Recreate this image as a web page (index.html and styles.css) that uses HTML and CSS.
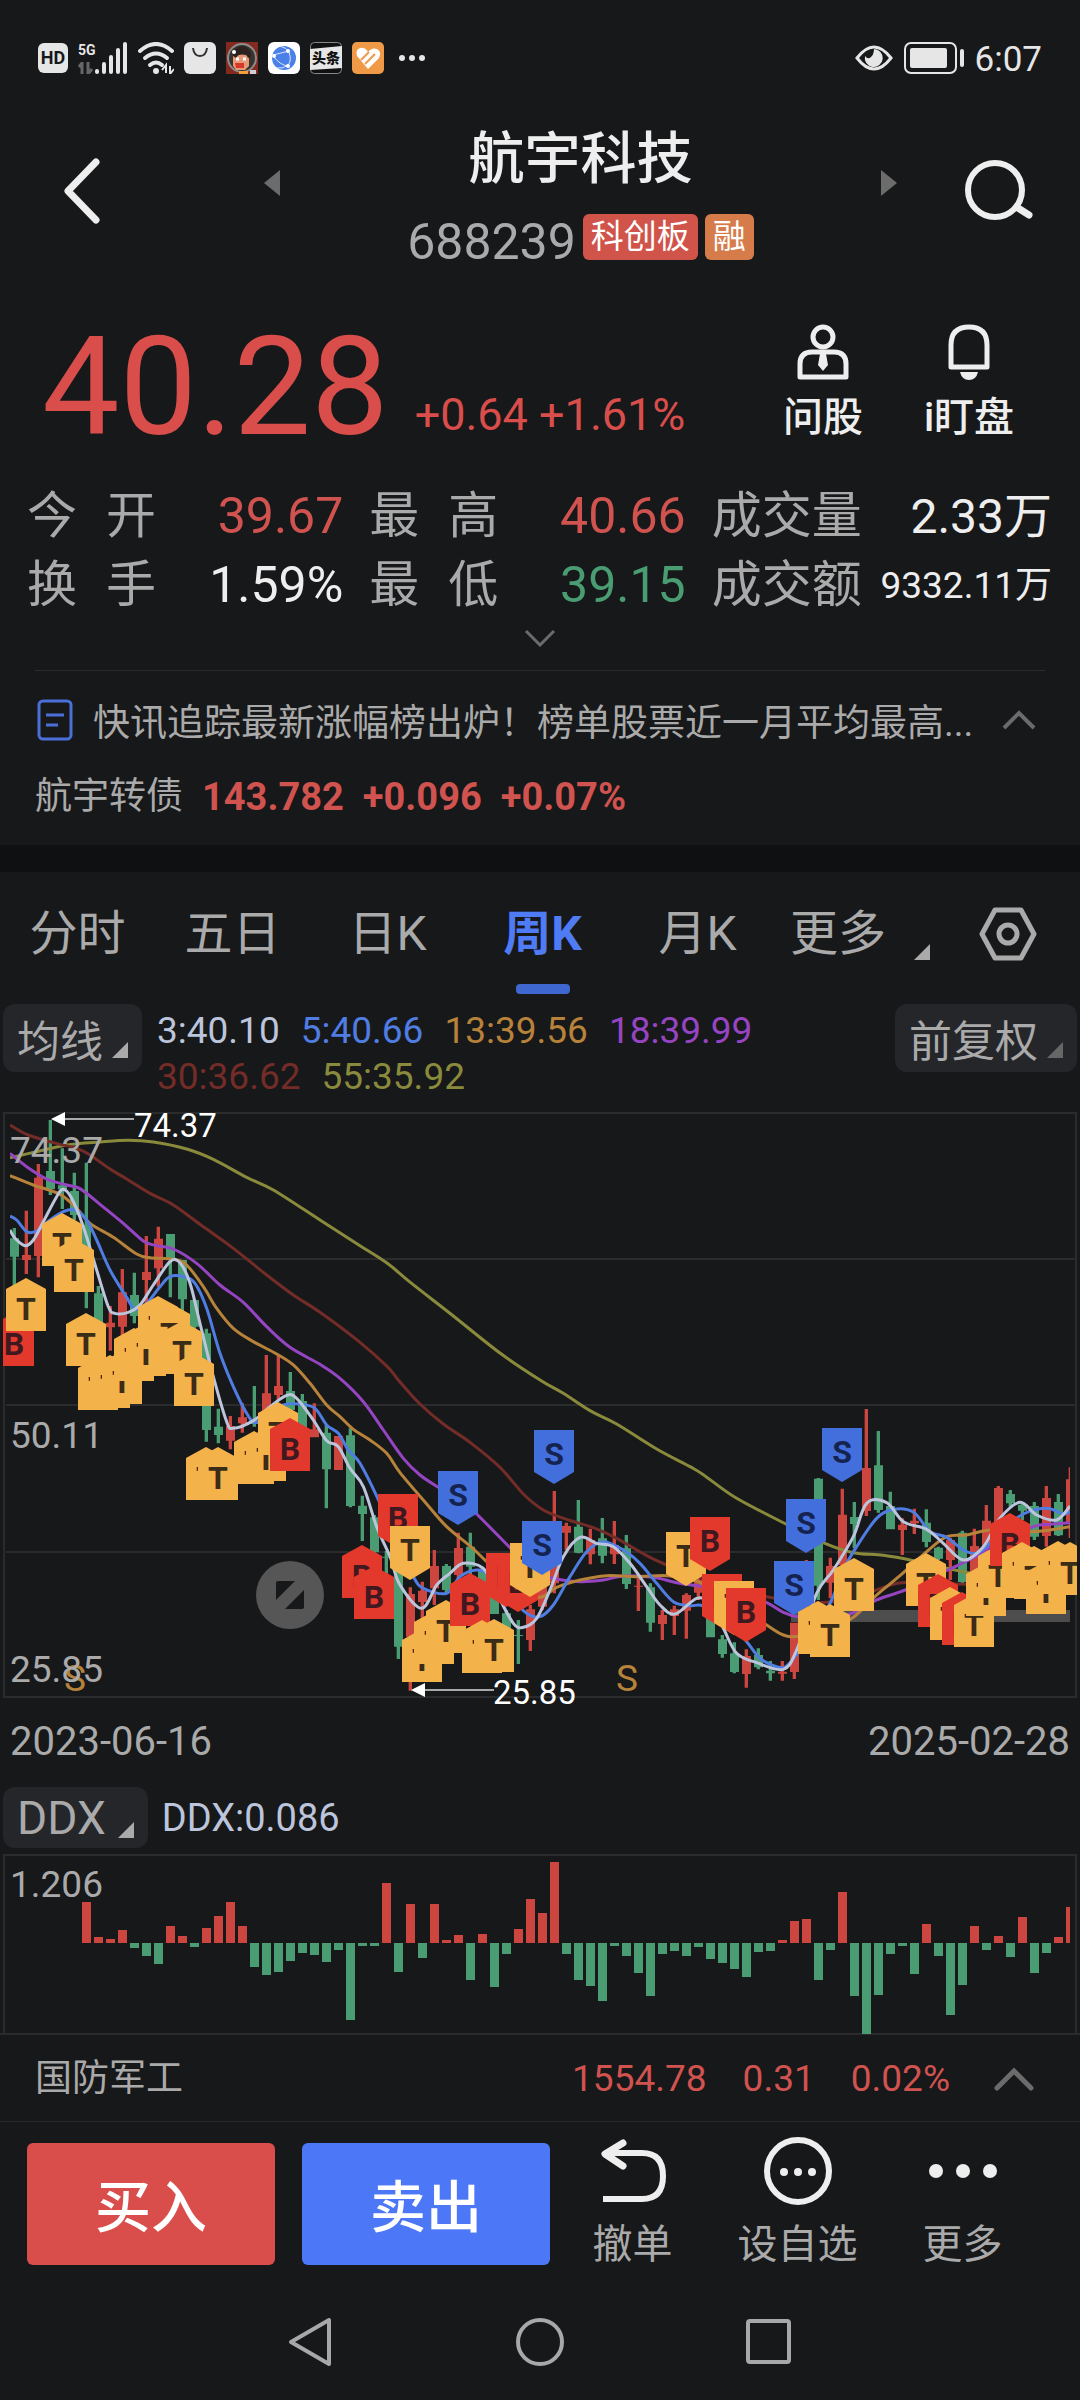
FILE: index.html
```
<!DOCTYPE html>
<html lang="zh-CN">
<head>
    <meta charset="UTF-8">
    <meta name="viewport" content="width=device-width, initial-scale=1.0">
    <title>航宇科技 688239</title>
    <link rel="stylesheet" href="styles.css">
</head>
<body>
    <div class="status-bar">
        <div class="status-left">
            <svg class="hd" width="30" height="30" viewBox="0 0 30 30"><rect width="30" height="30" rx="6" fill="#e6e6e6"/><text x="15" y="21" text-anchor="middle">HD</text></svg>
            <svg class="signal" width="50" height="32" viewBox="0 0 50 32">
                <text x="0" y="13">5G</text>
                <path d="M4 20v12M1 25l3-4M10 20v12l4-5" stroke="#666" stroke-width="3" fill="none"/>
                <path d="M19 29v1M26 22v8M33 15v15M40 8v22M47 2v28" stroke="#e6e6e6" stroke-width="4" stroke-linecap="round"/>
            </svg>
            <svg width="36" height="32" viewBox="0 0 36 32">
                <g fill="none" stroke="#e6e6e6" stroke-width="4" stroke-linecap="round"><path d="M2 9q16-14 32 0"/><path d="M7 16q11-9 22 0"/><path d="M12 23q6-5 12 0"/></g>
                <circle cx="18" cy="29" r="3" fill="#e6e6e6"/><path d="M28 31v-8l-4 5M32 24v8l4-5" stroke="#e6e6e6" stroke-width="2" fill="none"/>
            </svg>
            <svg width="32" height="32" viewBox="0 0 32 32"><rect width="32" height="32" rx="6" fill="#e6e6e6"/><path d="M9 6q1 8 7 8t7-8" fill="none" stroke="#333" stroke-width="2"/></svg>
            <svg width="32" height="32" viewBox="0 0 32 32">
                <rect width="32" height="32" fill="#84291f"/><circle cx="16" cy="16" r="14" fill="#3a3431" stroke="#8d8d8d" stroke-width="2"/>
                <path d="M7 14h4l4-2 8 2v10l-4 4H10l-3-4z" fill="#e89a78"/><path d="M7 14q0-9 9-10 9 1 9 11l-3 1-2-4-8 1-2 3z" fill="#2b2220"/>
                <path d="M9 21h9v5h-8z" fill="#d8382a"/><path d="M10 17h3M17 17h3" stroke="#fff" stroke-width="3"/><circle cx="8" cy="10" r="2" fill="#fff"/>
                <path d="M13 29h9v3h-9z" fill="#f0a23a"/><path d="M24 28h6v4h-6z" fill="#cfcfd4"/>
            </svg>
            <svg width="32" height="32" viewBox="0 0 32 32">
                <rect width="32" height="32" rx="6" fill="#fff"/><circle cx="16" cy="16" r="12" fill="#4a80e8"/>
                <path d="M12 4q7 2 9 6 3 9-1 13-5 4-11 3M5 13q8-2 16-4M6 15q6 8 14 9" fill="none" stroke="#dce8ff" stroke-width="1"/><circle cx="20" cy="9" r="2" fill="#fff"/><circle cx="20" cy="24" r="2" fill="#fff"/><circle cx="6" cy="14" r="2" fill="#fff"/>
            </svg>
            <svg class="toutiao" width="32" height="32" viewBox="0 0 32 32"><rect x=".5" y=".5" width="31" height="31" rx="4" fill="#111" stroke="#888"/><path d="M0 7l32-3v22l-32 2z" fill="#e6e6e6"/><text x="16" y="21" text-anchor="middle">头条</text></svg>
            <svg width="32" height="32" viewBox="0 0 32 32">
                <rect width="32" height="32" rx="5" fill="#f09a48"/><path d="M5 14q-2-6 3-8 5-1 8 4 4-5 9-3 5 3 2 9L16 27z" fill="#fff"/>
                <path d="M9 18l8-8M13 22l10-10" stroke="#f09a48" stroke-width="2"/>
            </svg>
            <svg class="dots" width="26" height="32" viewBox="0 0 26 32"><g fill="#e6e6e6"><circle cx="3" cy="16" r="3"/><circle cx="13" cy="16" r="3"/><circle cx="23" cy="16" r="3"/></g></svg>
        </div>
        <div class="status-right">
            <svg width="38" height="28" viewBox="0 0 38 28"><path d="M2 14Q19-8 36 14 19 36 2 14z" fill="none" stroke="#e6e6e6" stroke-width="3"/><path d="M19 5a9 9 0 1 1-9 7q3 4 6 1t3-8z" fill="#e6e6e6"/></svg>
            <svg width="60" height="34" viewBox="0 0 60 34"><rect x="1" y="2" width="51" height="30" rx="6" fill="none" stroke="#e6e6e6" stroke-width="2"/><rect x="6" y="7" width="37" height="20" rx="2" fill="#e6e6e6"/><rect x="56" y="8" width="4" height="18" rx="2" fill="#e6e6e6"/></svg>
            <span>6:07</span>
        </div>
    </div>

    <header class="header">
        <button class="back" aria-label="返回"><svg width="40" height="68" viewBox="0 0 40 68"><path d="M34 5L6 34l28 29" fill="none" stroke="#eee" stroke-width="7" stroke-linecap="round" stroke-linejoin="round"/></svg></button>
        <div class="pager">
            <button class="arrow" aria-label="上一只"><svg width="18" height="28" viewBox="0 0 18 28"><path d="M17 1v26L1 14z" fill="#6c6c6c"/></svg></button>
            <div class="stock">
                <h1>航宇科技</h1>
                <div class="code"><span>688239</span><span class="badge">科创板</span><span class="badge margin">融</span></div>
            </div>
            <button class="arrow" aria-label="下一只"><svg width="18" height="28" viewBox="0 0 18 28"><path d="M1 1v26l16-13z" fill="#6c6c6c"/></svg></button>
        </div>
        <button class="search" aria-label="搜索"><svg width="68" height="64" viewBox="0 0 68 64"><circle cx="30" cy="31" r="27" fill="none" stroke="#eee" stroke-width="6"/><path d="M53 49l11 7" stroke="#eee" stroke-width="7" stroke-linecap="round"/></svg></button>
    </header>

    <section class="quote">
        <div class="price">
            <strong>40.28</strong>
            <span>+0.64 +1.61%</span>
        </div>
        <div class="quote-actions">
            <button>
                <svg width="54" height="56" viewBox="0 0 54 56"><g fill="none" stroke="#eee" stroke-width="5"><circle cx="27" cy="13" r="10"/><path d="M4 53V40q0-12 12-12h22q12 0 12 12v13z" stroke-linejoin="round"/></g><path d="M24 30h6l2 11-5 6-5-6z" fill="#eee"/></svg>
                <span>问股</span>
            </button>
            <button>
                <svg width="54" height="56" viewBox="0 0 54 56"><path d="M9 43V21q0-18 18-18t18 18v22z" fill="none" stroke="#eee" stroke-width="5" stroke-linejoin="round"/><path d="M18 48h18q-2 8-9 8t-9-8z" fill="#eee"/></svg>
                <span>i盯盘</span>
            </button>
        </div>
    </section>

    <dl class="stats">
        <div><dt><span>今</span><span>开</span></dt><dd class="up">39.67</dd></div>
        <div><dt><span>最</span><span>高</span></dt><dd class="up">40.66</dd></div>
        <div><dt>成交量</dt><dd class="volume">2.33万</dd></div>
        <div><dt><span>换</span><span>手</span></dt><dd>1.59%</dd></div>
        <div><dt><span>最</span><span>低</span></dt><dd class="down">39.15</dd></div>
        <div><dt>成交额</dt><dd class="long">9332.11万</dd></div>
    </dl>
    <button class="expand" aria-label="展开"><svg width="32" height="18" viewBox="0 0 32 18"><path d="M2 2l14 14L30 2" fill="none" stroke="#6b6b6b" stroke-width="3"/></svg></button>

    <section class="news">
        <a class="news-row" href="#">
            <svg width="36" height="42" viewBox="0 0 36 42"><rect x="2" y="2" width="32" height="38" rx="4" fill="none" stroke="#4a70d8" stroke-width="3"/><path d="M9 16h18M9 26h12" stroke="#4a70d8" stroke-width="3"/></svg>
            <span>快讯追踪最新涨幅榜出炉！榜单股票近一月平均最高...</span>
            <svg width="36" height="22" viewBox="0 0 36 22"><path d="M3 19L18 4l15 15" fill="none" stroke="#6b6b6b" stroke-width="4"/></svg>
        </a>
        <a class="bond" href="#"><span>航宇转债</span><b>143.782</b><b>+0.096</b><b>+0.07%</b></a>
    </section>

    <nav class="tabs">
        <button>分时</button>
        <button>五日</button>
        <button>日K</button>
        <button class="active">周K</button>
        <button>月K</button>
        <div class="tabs-more">
            <button>更多<svg width="16" height="16" viewBox="0 0 16 16"><path d="M16 0v16H0z" fill="#aaa"/></svg></button>
            <button aria-label="设置"><svg width="58" height="54" viewBox="0 0 58 54"><path d="M16 3h26l13 24-13 24H16L3 27z" fill="none" stroke="#aaa" stroke-width="5" stroke-linejoin="round"/><circle cx="29" cy="27" r="9" fill="none" stroke="#aaa" stroke-width="5"/></svg></button>
        </div>
    </nav>

    <div class="ma-bar">
        <button class="picker">均线<svg width="16" height="16" viewBox="0 0 16 16"><path d="M16 0v16H0z" fill="#aaa"/></svg></button>
        <div class="legend">
            <span class="ma3">3:40.10</span>
            <span class="ma5">5:40.66</span>
            <span class="ma13">13:39.56</span>
            <span class="ma18">18:39.99</span>
            <span class="ma30">30:36.62</span>
            <span class="ma55">55:35.92</span>
        </div>
        <button class="picker">前复权<svg width="16" height="16" viewBox="0 0 16 16"><path d="M16 0v16H0z" fill="#666"/></svg></button>
    </div>

    <div class="kline">
        <svg viewBox="0 0 1080 612">
            <defs>
                <clipPath id="plot"><rect x="10" y="0" width="1060" height="612"/></clipPath>
                <clipPath id="frame"><rect x="3" y="0" width="1074" height="612"/></clipPath>
            </defs>
            <g class="grid">
                <rect x="4" y="13" width="1072" height="584"/>
                <path d="M6 159h1069M6 305h1069M6 452h1069"/>
            </g>
            <rect x="791" y="510" width="279" height="12" fill="#4d4d4e"/>
            <g clip-path="url(#plot)">
                <g id="candles" transform="scale(.33333)"></g>
                <g id="lines" transform="scale(.33333)"></g>
            </g>
            <g id="markers" clip-path="url(#frame)"></g>
            <text class="split" x="75" y="591" text-anchor="middle">S</text>
            <text class="split" x="627" y="591" text-anchor="middle">S</text>
            <text class="axis" x="10" y="63">74.37</text>
            <text class="axis" x="10" y="348">50.11</text>
            <text class="axis" x="10" y="582">25.85</text>
            <path d="M62 19h72M422 590h72" stroke="#aaa" stroke-width="2"/>
            <path d="M51 19l14-7v14zM411 590l14-7v14z" fill="#fff"/>
            <text class="peak" x="134" y="37">74.37</text>
            <text class="peak" x="493" y="604">25.85</text>
        </svg>
        <button class="fullscreen" aria-label="全屏"><svg width="28" height="28" viewBox="0 0 28 28"><path d="M0 2q0-2 2-2h17L0 19zM28 9v17q0 2-2 2H9z" fill="#17181a"/></svg></button>
    </div>
    <div class="dates"><span>2023-06-16</span><span>2025-02-28</span></div>

    <div class="ddx-bar">
        <button class="picker">DDX<svg width="16" height="16" viewBox="0 0 16 16"><path d="M16 0v16H0z" fill="#aaa"/></svg></button>
        <span class="ma3">DDX:0.086</span>
    </div>
    <svg class="ddx" viewBox="0 0 1080 182">
        <g class="grid"><path d="M4 182V2h1072v180M0 181h1080"/></g>
        <g id="ddx"></g>
        <text class="axis" x="10" y="44">1.206</text>
    </svg>

    <a class="sector" href="#">
        <span class="name">国防军工</span>
        <span>1554.78</span>
        <span>0.31</span>
        <span>0.02%</span>
        <svg width="40" height="26" viewBox="0 0 40 26"><path d="M3 22L20 5l17 17" fill="none" stroke="#6b6b6b" stroke-width="5" stroke-linecap="round"/></svg>
    </a>

    <div class="trade">
        <button class="buy">买入</button>
        <button class="sell">卖出</button>
        <button class="tool">
            <svg width="68" height="68" viewBox="0 0 68 68"><path d="M7 16h36q21 0 21 23T43 62H4" fill="none" stroke="#eee" stroke-width="6"/><path d="M24 6L6 17l18 12" fill="none" stroke="#eee" stroke-width="7" stroke-linecap="round" stroke-linejoin="round"/></svg>
            <span>撤单</span>
        </button>
        <button class="tool">
            <svg width="68" height="68" viewBox="0 0 68 68"><circle cx="34" cy="34" r="31" fill="none" stroke="#eee" stroke-width="6"/><g fill="#eee"><circle cx="20" cy="35" r="4"/><circle cx="34" cy="35" r="4"/><circle cx="48" cy="35" r="4"/></g></svg>
            <span>设自选</span>
        </button>
        <button class="tool">
            <svg width="70" height="68" viewBox="0 0 70 68"><g fill="#eee"><circle cx="8" cy="34" r="7"/><circle cx="35" cy="34" r="7"/><circle cx="62" cy="34" r="7"/></g></svg>
            <span>更多</span>
        </button>
    </div>

    <div class="system-nav">
        <button aria-label="返回"><svg width="50" height="50" viewBox="0 0 50 50"><path d="M43 3v44L5 25z"/></svg></button>
        <button aria-label="主屏"><svg width="50" height="50" viewBox="0 0 50 50"><circle cx="25" cy="25" r="22"/></svg></button>
        <button aria-label="最近任务"><svg width="50" height="50" viewBox="0 0 50 50"><rect x="4" y="4" width="41" height="41" rx="2"/></svg></button>
    </div>

    <script>
        const RED = '#cc463f';
        const GREEN = '#4a9d72';

        // [涨跌, 影线上, 实体上, 实体下, 影线下]
        const candles = [
            [0,384,415,470,560],[1,332,465,480,522],[1,192,233,468,532],[0,60,213,268,285],[0,145,256,268,327],
            [0,218,273,345,360],[0,188,375,440,625],[0,558,580,680,700],[1,618,668,682,752],[1,507,577,680,720],
            [0,518,585,648,670],[1,408,516,540,610],[1,380,416,505,560],[0,402,402,475,592],[0,480,480,598,640],
            [0,598,600,680,690],[0,686,700,990,1025],[0,926,980,1005,1030],[1,948,978,1022,1048],[1,910,952,970,998],
            [0,858,960,972,980],[1,765,880,950,960],[1,768,858,885,900],[0,816,873,930,960],[0,882,903,985,990],
            [1,910,988,1012,1012],[0,975,998,1108,1225],[1,1008,1008,1110,1110],[0,985,1006,1218,1222],[0,1187,1217,1242,1323],
            [0,1245,1252,1357,1360],[0,1353,1370,1373,1430],[0,1400,1400,1640,1677],[1,1462,1482,1610,1772],[1,1445,1472,1506,1600],
            [1,1350,1398,1465,1515],[0,1392,1398,1470,1480],[1,1298,1344,1425,1440],[0,1298,1340,1400,1425],[0,1400,1410,1460,1470],
            [0,1410,1420,1542,1542],[0,1530,1540,1585,1600],[0,1560,1605,1608,1692],[1,1515,1528,1620,1653],[1,1430,1440,1520,1530],
            [1,1173,1320,1450,1480],[1,1268,1278,1298,1350],[0,1200,1280,1358,1360],[1,1286,1320,1363,1393],[0,1254,1315,1367,1390],
            [1,1263,1335,1363,1392],[0,1305,1345,1452,1467],[1,1430,1457,1460,1533],[0,1450,1462,1568,1595],[1,1530,1545,1572,1620],
            [1,1517,1528,1548,1605],[1,1480,1485,1532,1616],[1,1430,1440,1478,1500],[0,1470,1470,1612,1612],[0,1605,1618,1662,1673],
            [0,1627,1660,1716,1720],[1,1648,1668,1722,1763],[0,1645,1665,1702,1708],[0,1683,1712,1720,1742],[1,1683,1715,1721,1742],
            [1,1568,1568,1716,1737],[1,1380,1400,1500,1530],[0,1134,1136,1457,1500],[1,1373,1398,1448,1495],[1,1166,1244,1395,1395],
            [0,1206,1251,1272,1345],[1,927,1104,1233,1248],[0,993,1096,1230,1238],[0,1175,1218,1288,1288],[1,1255,1274,1290,1365],
            [1,1226,1262,1270,1302],[0,1228,1268,1326,1342],[0,1340,1343,1376,1380],[1,1313,1320,1380,1440],[0,1292,1298,1446,1450],
            [1,1286,1338,1415,1415],[1,1215,1262,1340,1360],[1,1158,1164,1270,1280],[0,1170,1182,1210,1220],[0,1210,1214,1232,1260],
            [0,1206,1218,1310,1320],[1,1158,1194,1308,1340],[0,1182,1206,1306,1308],[1,1102,1138,1270,1314]
        ];

        // 均线
        const averages = {
            '#8a8a3c': [30,173,110,155,200,135,300,126,385,121,460,126,560,147,640,178,740,232,820,270,960,360,1080,437,1162,490,1232,548,1360,648,1501,760,1620,840,1690,880,1770,932,1850,972,1970,1047,2070,1100,2110,1124,2210,1195,2360,1273,2475,1330,2560,1358,2650,1366,2740,1382,2840,1405,2940,1425],
            '#732c27': [30,75,80,103,160,128,230,145,270,165,330,207,380,237,450,280,520,315,600,373,700,445,800,525,880,585,960,637,1080,727,1162,800,1195,840,1260,912,1330,972,1410,1027,1500,1102,1570,1182,1630,1230,1700,1258,1780,1283,1850,1315,1940,1367,2000,1395,2120,1440,2300,1490,2450,1508,2560,1495,2650,1462,2720,1447,2870,1452,2940,1454],
            '#9645c2': [30,160,80,200,140,237,200,255,240,266,300,313,370,370,430,423,470,437,520,447,590,490,660,555,730,607,800,680,870,742,960,793,1020,835,1090,905,1150,990,1210,1075,1260,1125,1317,1163,1375,1195,1430,1242,1535,1348,1600,1410,1660,1435,1740,1445,1810,1440,1870,1428,1960,1432,2030,1448,2110,1460,2210,1475,2300,1508,2350,1537,2400,1552,2480,1556,2550,1542,2630,1500,2720,1468,2850,1407,2930,1368,2990,1330,3100,1280,3150,1273,3210,1268],
            '#b7823a': [30,227,100,255,180,283,230,325,270,370,340,412,410,462,450,473,520,478,560,495,610,560,650,625,700,685,760,725,830,762,880,795,930,850,980,915,1020,950,1060,988,1110,1020,1160,1060,1200,1118,1280,1212,1340,1280,1410,1338,1460,1385,1550,1470,1620,1492,1670,1462,1740,1440,1820,1427,1910,1430,2000,1427,2080,1440,2160,1480,2300,1575,2350,1605,2400,1608,2500,1580,2560,1552,2630,1485,2700,1427,2780,1355,2840,1310,2900,1305,2970,1290,3090,1295,3150,1290,3210,1280],
            '#4f7de2': [30,348,50,360,80,395,110,393,150,360,190,335,225,330,260,360,290,420,330,510,380,592,405,628,440,610,480,560,510,530,550,530,585,550,620,625,660,760,700,860,740,940,765,968,800,945,850,915,900,912,945,925,980,975,1015,1000,1045,1050,1080,1090,1140,1210,1190,1330,1240,1430,1270,1465,1340,1480,1380,1430,1430,1410,1470,1425,1520,1480,1580,1540,1620,1550,1660,1515,1710,1430,1760,1355,1810,1325,1870,1350,1920,1390,1970,1450,2020,1505,2070,1517,2110,1518,2180,1560,2240,1625,2280,1675,2330,1700,2360,1698,2400,1650,2450,1580,2495,1500,2530,1410,2570,1340,2630,1255,2680,1228,2740,1236,2790,1295,2840,1312,2890,1350,2930,1360,2970,1330,3020,1280,3070,1242,3140,1225,3190,1242,3210,1235],
            '#bcc5dc': [30,390,45,415,75,437,100,420,130,365,170,290,190,268,215,295,250,380,290,510,325,620,345,640,385,637,420,615,460,555,510,485,540,488,570,550,600,670,640,830,680,965,700,985,760,962,810,920,860,886,890,895,940,960,980,1022,1015,1040,1050,1105,1090,1160,1130,1280,1170,1370,1200,1455,1265,1525,1310,1455,1350,1420,1390,1390,1450,1405,1490,1480,1540,1570,1570,1582,1610,1555,1650,1470,1690,1370,1740,1312,1790,1330,1840,1340,1890,1390,1940,1460,1980,1515,2025,1542,2090,1495,2130,1510,2170,1585,2210,1660,2270,1688,2350,1708,2390,1650,2450,1480,2500,1410,2560,1310,2600,1210,2660,1208,2710,1265,2780,1288,2830,1330,2890,1380,2950,1340,3000,1255,3060,1207,3110,1245,3170,1260,3210,1218]
        };

        // 买卖点: [第几根, 字母, 顶部, 朝下]
        const markers = [
            [0,'B',640],[1,'T',535],[4,'T',340],[5,'T',418],[6,'T',640],[7,'T',772],[8,'T',766],[9,'T',754],[10,'T',685],
            [11,'T',668],[12,'T',587],[13,'T',610],[14,'T',662],[15,'T',760],[16,'T',1040],[17,'T',1042],[20,'T',994],
            [21,'T',985],[22,'T',906],[23,'B',955],[29,'B',1335],[30,'B',1398],[32,'B',1182,1],[33,'T',1278,1],[34,'T',1588],
            [35,'T',1532],[36,'T',1500],[37,'S',1113,1],[38,'B',1418],[39,'T',1560],[40,'T',1558],[41,'B',1358,1],
            [42,'B',1375,1],[43,'T',1328,1],[44,'S',1262,1],[45,'S',990,1],[56,'T',1296,1],[58,'B',1251,1],[59,'B',1423,1],
            [60,'T',1442,1],[61,'B',1464,1],[65,'S',1383,1],[66,'S',1197,1],[67,'T',1502],[68,'T',1512],[69,'S',984,1],
            [70,'T',1375],[76,'T',1360],[77,'B',1423],[78,'T',1462],[79,'B',1475],[80,'T',1483],[81,'T',1388],[82,'T',1335],
            [83,'B',1240],[84,'T',1327],[85,'T',1337],[86,'T',1384],[87,'T',1322],[88,'T',1327]
        ];

        // 从第 7 根开始
        const ddx = [123,18,12,39,-14,-39,-63,51,20,-11,45,81,123,50,-72,-95,-87,-53,-31,-36,-58,-20,-230,-9,-9,180,-87,117,
            -45,117,10,24,-111,27,-132,-32,43,132,91,243,-32,-111,-129,-174,-9,-38,-90,-159,-32,-23,-39,-12,-48,-60,-78,-101,
            -27,-23,10,67,72,-111,-21,152,-159,-273,-156,-32,-9,-92,57,-39,-215,-125,50,-20,20,-42,78,-90,-30,18,108];

        document.getElementById('candles').innerHTML = candles.map(([up, high, top, bottom, low], i) => {
            const x = 43 + i * 36;
            return `<path fill="${up ? RED : GREEN}" d="M${x - 5} ${high}h10V${low}h-10zM${x - 13} ${top}h27V${bottom}h-27z"/>`;
        }).join('');

        function smooth(p) {
            let d = `M${p[0]} ${p[1]}`;
            for (let i = 0; i < p.length - 2; i += 2) {
                const a = i ? i - 2 : 0;
                const b = i + 4 < p.length ? i + 4 : i + 2;
                d += `C${p[i] + (p[i + 2] - p[a]) / 6} ${p[i + 1] + (p[i + 3] - p[a + 1]) / 6} ` +
                    `${p[i + 2] - (p[b] - p[i]) / 6} ${p[i + 3] - (p[b + 1] - p[i + 1]) / 6} ${p[i + 2]} ${p[i + 3]}`;
            }
            return d;
        }

        document.getElementById('lines').innerHTML = Object.entries(averages).map(([color, points]) =>
            `<path d="${smooth(points)}" fill="none" stroke="${color}" stroke-width="9"/>`).join('');

        document.getElementById('markers').innerHTML = markers.map(([i, letter, top, down]) => {
            const x = 14 + i * 12;
            const y = Math.round(top / 3);
            const shape = down ? `M${x - 20} ${y}h40v42l-20 12-20-12z` : `M${x} ${y}l20 11v42h-40v-42z`;
            return `<path class="mark-${letter}" d="${shape}"/><text class="mark-text text-${letter}" x="${x}" y="${y + (down ? 35 : 42)}" text-anchor="middle">${letter}</text>`;
        }).join('');

        document.getElementById('ddx').innerHTML = ddx.map((value, n) => {
            const h = Math.round(Math.abs(value) / 3);
            const i = n + 6;
            return `<rect x="${10 + i * 12}" y="${value > 0 ? 90 - h : 90}" width="${i === 88 ? 4 : 9}" height="${h}" fill="${value > 0 ? RED : GREEN}"/>`;
        }).join('');
    </script>
</body>
</html>
```
FILE: styles.css
```
* {
    box-sizing: border-box;
}
body {
    margin: 0;
    background-color: #17181a;
    color: #aaaaaa;
    font-family: Roboto, "Noto Sans CJK SC", sans-serif;
    font-size: 37px;
}
button {
    padding: 0;
    border: none;
    background: none;
    color: inherit;
    font: inherit;
    cursor: pointer;
}
a {
    color: inherit;
    text-decoration: none;
}
svg {
    display: block;
    flex: none;
}
.status-bar {
    display: flex;
    justify-content: space-between;
    align-items: center;
    height: 116px;
    padding: 0 38px;
    color: #e6e6e6;
}
.status-left {
    display: flex;
    align-items: center;
    gap: 10px;
}
.hd text {
    font-size: 18px;
    font-weight: bold;
    fill: #17181a;
}
.signal text {
    font-size: 14px;
    font-weight: bold;
    fill: #e6e6e6;
}
.toutiao text {
    font-size: 14px;
    font-weight: 900;
    fill: #111111;
}
.dots {
    margin-left: 5px;
}
.status-right {
    display: flex;
    align-items: center;
    gap: 11px;
    font-size: 35px;
    line-height: 60px;
}
.status-right span {
    padding-top: 3px;
}
.header {
    display: flex;
    gap: 67px;
    padding: 0 47px 0 62px;
}
.back {
    width: 134px;
    height: 150px;
}
.search {
    height: 150px;
}
.pager {
    flex: 1;
    display: flex;
    justify-content: space-between;
}
.arrow {
    height: 134px;
}
.stock {
    text-align: center;
}
.stock h1 {
    margin: 0;
    color: #eeeeee;
    font-size: 56px;
    font-weight: 500;
    line-height: 86px;
}
.code {
    display: flex;
    align-items: flex-start;
    gap: 7px;
    height: 80px;
    padding-top: 12px;
    font-size: 50px;
    line-height: 56px;
}
.badge {
    padding: 0 8px;
    border-radius: 6px;
    background-color: #d0544a;
    color: #ffffff;
    font-size: 33px;
    line-height: 46px;
}
.badge.margin {
    background-color: #d67b4a;
}
.quote {
    display: flex;
    justify-content: space-between;
    align-items: center;
    height: 198px;
    padding: 12px 38px 0 42px;
}
.price {
    display: flex;
    align-items: flex-end;
    gap: 26px;
    color: #d94d4b;
}
.price strong {
    font-size: 138px;
    font-weight: normal;
    line-height: 140px;
}
.price span {
    font-size: 45px;
    line-height: 84px;
}
.quote-actions {
    display: flex;
    padding-bottom: 6px;
}
.quote-actions button {
    display: flex;
    flex-direction: column;
    align-items: center;
    gap: 12px;
    width: 146px;
    color: #eeeeee;
    font-size: 40px;
    font-weight: 500;
    line-height: 52px;
}
.stats {
    display: grid;
    grid-template-columns: 316fr 316fr 340fr;
    column-gap: 26px;
    margin: 0;
    padding: 2px 28px 0 27px;
    font-size: 50px;
    line-height: 69px;
}
.stats div {
    display: flex;
    justify-content: space-between;
}
.stats dt {
    display: flex;
    gap: 29px;
}
.stats dd {
    margin: 0;
    color: #eeeeee;
}
.stats dd.up {
    color: #d0534f;
}
.stats dd.down {
    color: #4a9d72;
}
.stats dd.volume {
    font-size: 48px;
}
.stats dd.long {
    font-size: 37px;
}
.expand {
    display: flex;
    justify-content: center;
    align-items: center;
    width: 100%;
    height: 36px;
    margin-bottom: 14px;
}
.news {
    margin: 0 35px;
    padding-bottom: 20px;
    border-top: 1px solid #2a2b2d;
}
.news-row {
    display: flex;
    align-items: center;
    height: 98px;
    padding: 0 8px 0 2px;
}
.news-row span {
    flex: 1;
    min-width: 0;
    margin-left: 20px;
    overflow: hidden;
    white-space: nowrap;
}
.bond {
    display: flex;
    gap: 19px;
    line-height: 56px;
}
.bond b {
    color: #d0534f;
    font-size: 38px;
}
.tabs {
    display: grid;
    grid-template-columns: repeat(5, 155fr) 305fr;
    height: 151px;
    border-top: 27px solid #0f1012;
    font-size: 48px;
    line-height: 124px;
}
.tabs .active {
    position: relative;
    color: #4f7bf5;
    font-weight: bold;
}
.tabs .active::after {
    content: "";
    position: absolute;
    left: 50%;
    bottom: 2px;
    width: 54px;
    height: 10px;
    margin-left: -27px;
    border-radius: 4px;
    background-color: #3e68cf;
}
.tabs-more {
    display: flex;
    justify-content: space-between;
    align-items: center;
    padding: 0 43px 0 15px;
}
.tabs-more button {
    display: flex;
    align-items: center;
    gap: 28px;
}
.tabs-more button svg[width="16"] {
    margin-top: 36px;
}
.ma-bar {
    display: flex;
    align-items: flex-start;
    min-height: 104px;
    padding: 8px 3px 0;
}
.picker {
    display: flex;
    align-items: center;
    gap: 9px;
    height: 68px;
    padding: 0 14px;
    border-radius: 12px;
    background-color: #25262a;
    font-size: 43px;
}
.picker svg {
    margin-top: 24px;
}
.legend {
    flex: 1;
    display: flex;
    flex-wrap: wrap;
    column-gap: 21px;
    padding: 4px 15px 0;
    line-height: 46px;
}
.ma3 {
    color: #bcc5dc;
}
.ma5 {
    color: #4f7de2;
}
.ma13 {
    color: #b7823a;
}
.ma18 {
    color: #9645c2;
}
.ma30 {
    color: #732c27;
}
.ma55 {
    color: #8a8a3c;
}
.kline {
    position: relative;
}
.grid {
    fill: none;
    stroke: #2a2b2d;
    stroke-width: 2;
}
.axis {
    fill: #aaaaaa;
    font-size: 37px;
}
.peak {
    fill: #ffffff;
    font-size: 33px;
}
.split {
    fill: #b7823a;
    font-size: 37px;
}
.mark-T {
    fill: #f3b24a;
}
.mark-B {
    fill: #e3392c;
}
.mark-S {
    fill: #436fdd;
}
.mark-text {
    font-size: 32px;
    font-weight: bold;
}
.text-T {
    fill: #3a2c16;
}
.text-B {
    fill: #3f1820;
}
.text-S {
    fill: #142350;
}
.fullscreen {
    position: absolute;
    left: 256px;
    top: 461px;
    display: flex;
    justify-content: center;
    align-items: center;
    width: 68px;
    height: 68px;
    border-radius: 50%;
    background-color: #565656;
}
.dates {
    display: flex;
    justify-content: space-between;
    padding: 0 10px;
    font-size: 40px;
    line-height: 60px;
}
.ddx-bar {
    display: flex;
    align-items: center;
    gap: 14px;
    padding: 15px 3px 5px;
}
.ddx-bar span {
    font-size: 38px;
}
.ddx-bar .picker {
    gap: 12px;
    height: 61px;
    font-size: 46px;
}
.sector {
    display: flex;
    align-items: center;
    gap: 36px;
    padding: 2px 46px 0 35px;
    border-bottom: 1px solid #2a2b2d;
    color: #d0534f;
    line-height: 84px;
}
.sector .name {
    flex: 1;
    color: #aaaaaa;
}
.sector svg {
    margin-left: 8px;
}
.trade {
    display: flex;
    align-items: center;
    padding: 15px 35px 13px 27px;
}
.buy, .sell {
    flex: 248;
    height: 122px;
    padding-bottom: 4px;
    border-radius: 6px;
    color: #ffffff;
    font-size: 56px;
    font-weight: 500;
}
.buy {
    margin-right: 27px;
    background-color: #d94d4b;
}
.sell {
    background-color: #4c77f6;
}
.tool {
    flex: 165;
    display: flex;
    flex-direction: column;
    align-items: center;
    gap: 14px;
    font-size: 40px;
    line-height: 52px;
}
.system-nav {
    display: flex;
    justify-content: center;
    gap: 179px;
    height: 116px;
}
.system-nav svg {
    fill: none;
    stroke: #a8a8a8;
    stroke-width: 4;
    stroke-linejoin: round;
}
```
